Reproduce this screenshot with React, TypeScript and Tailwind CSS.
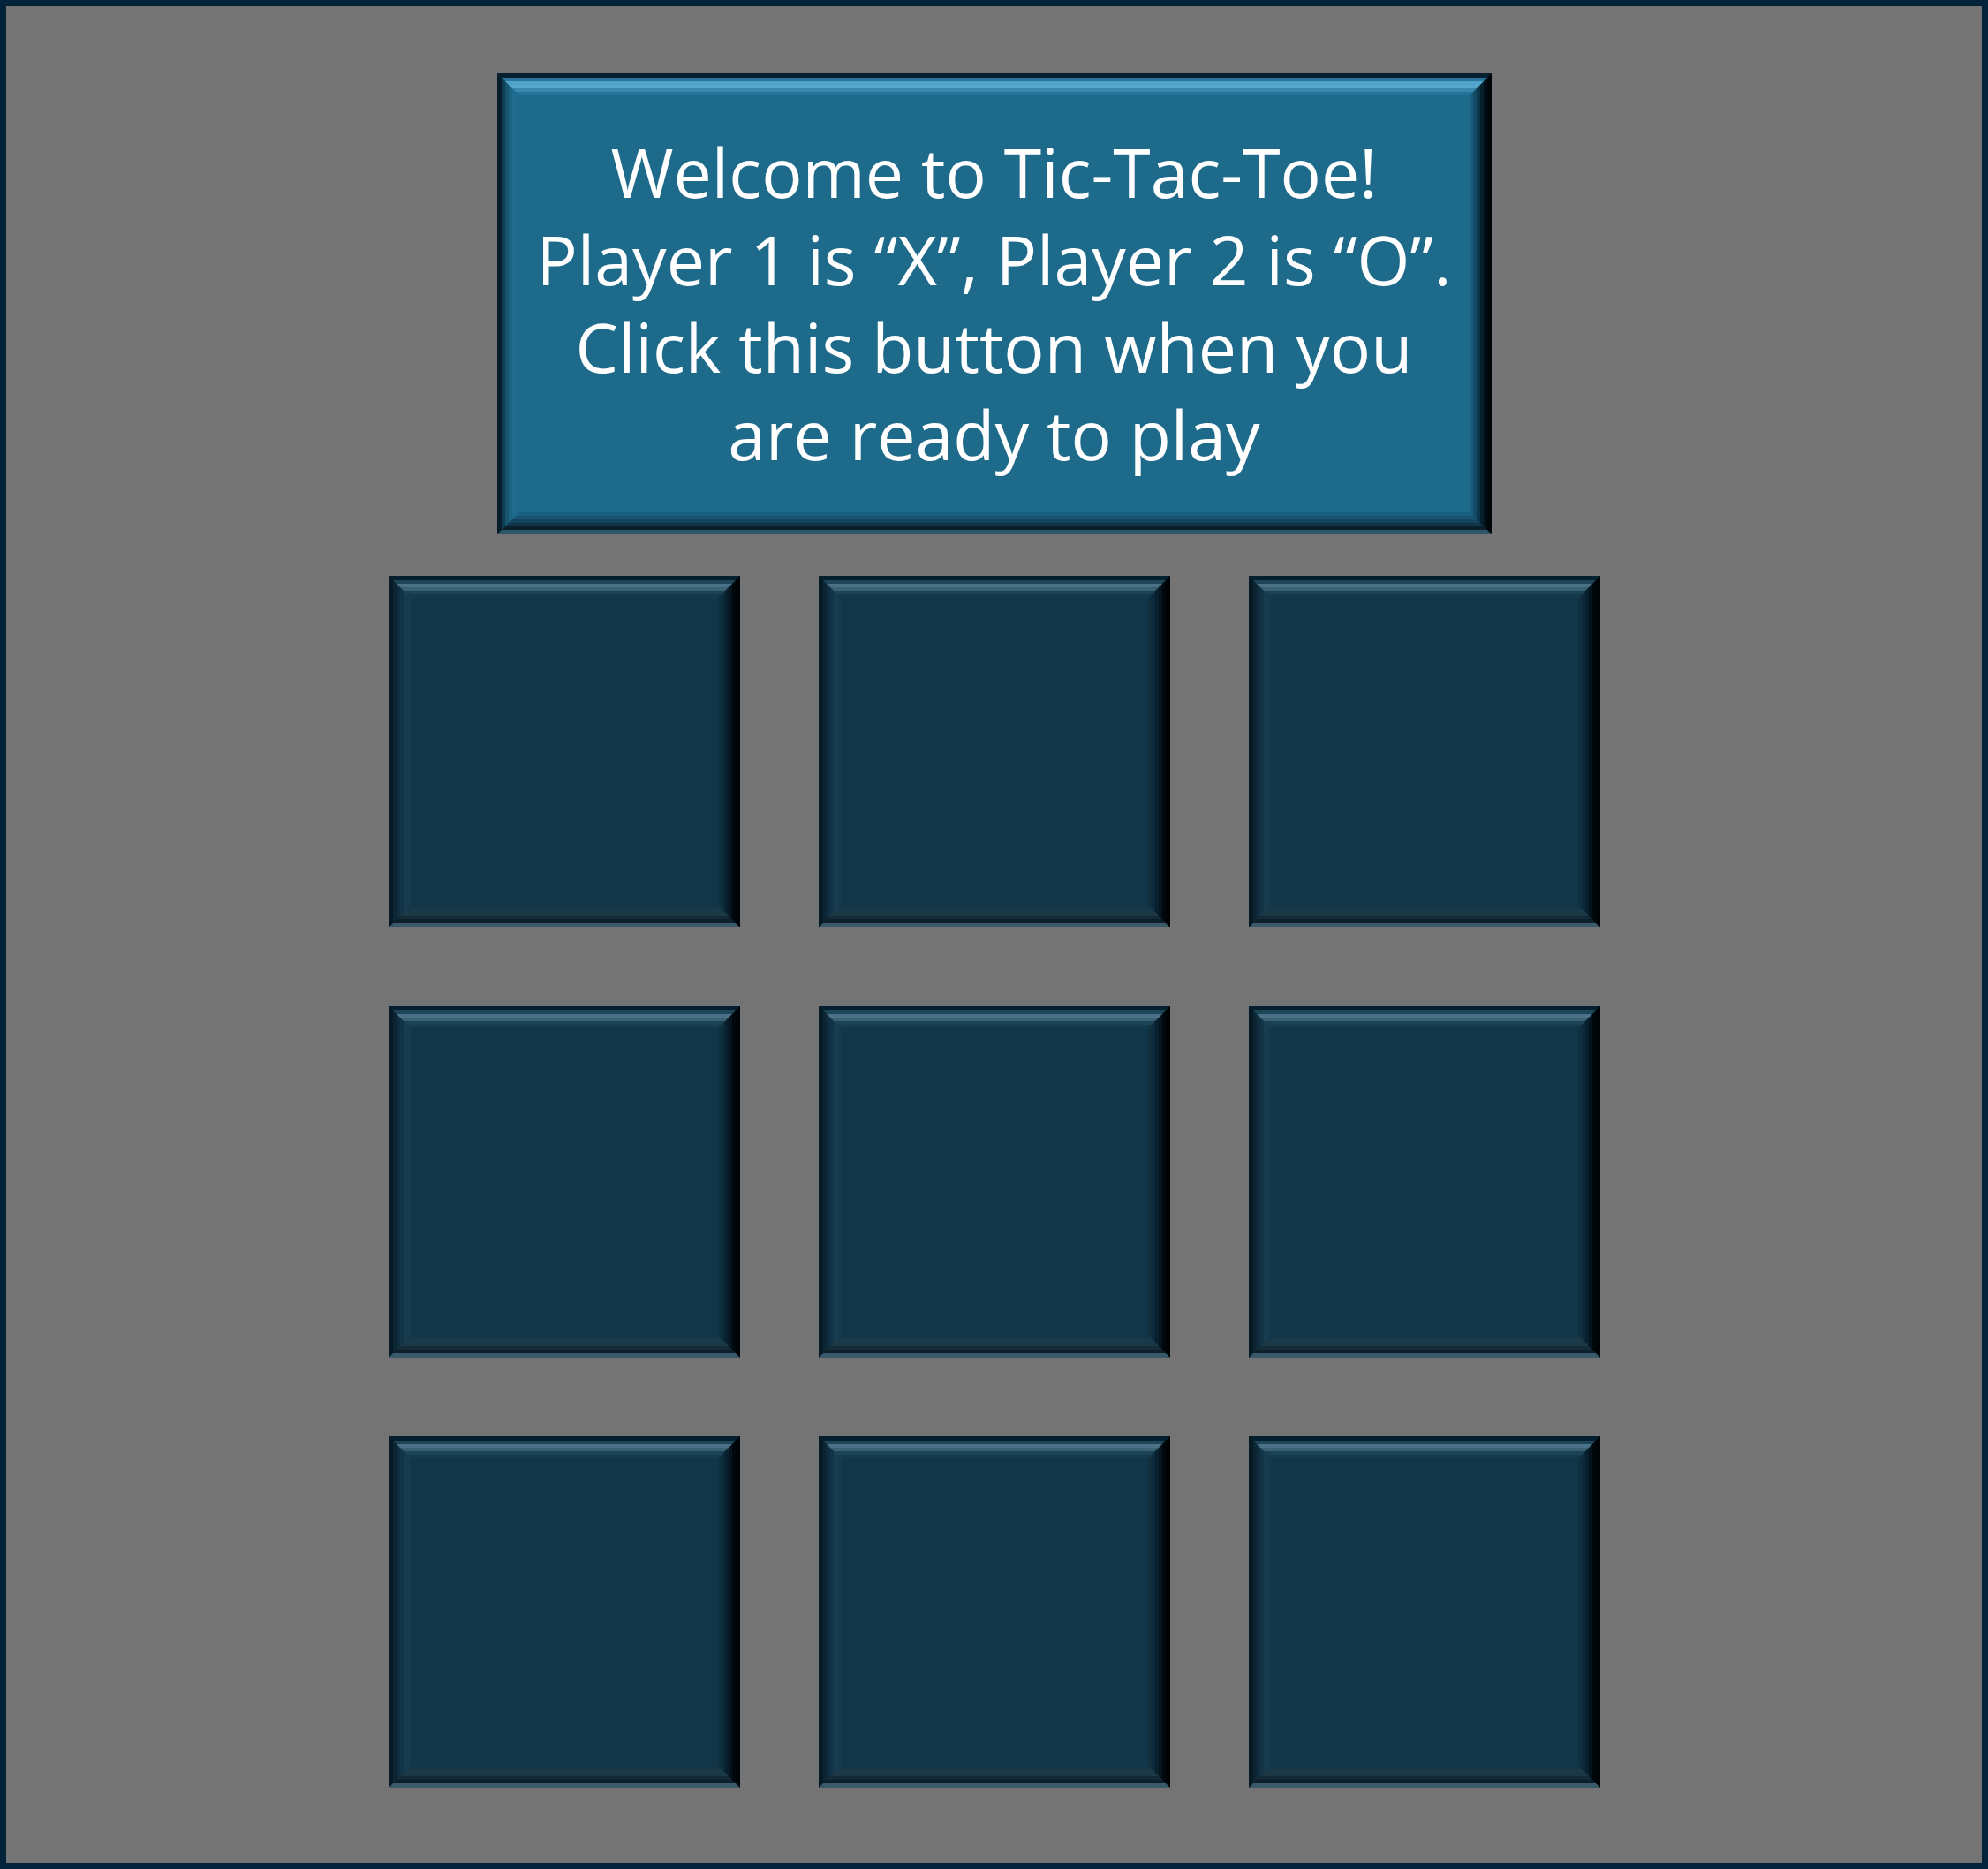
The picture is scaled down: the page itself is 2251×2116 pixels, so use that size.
import type { ReactNode } from "react";

// each ring of the bevel is a mitered border, outer → inner
const bannerRings = [
  "border-[5px] border-t-[#06202f] border-l-[#061e2b] border-r-[#000508] border-b-[#30566a]",
  "border-[4px] border-t-[#2a7598] border-l-[#0f3d54] border-r-[#020f17] border-b-[#0b1f2b]",
  "border-[4px] border-t-[#4da3c8] border-l-[#175470] border-r-[#06202e] border-b-[#10344a]",
  "border-[4px] border-t-[#55a8cc] border-l-[#1d6384] border-r-[#0c354a] border-b-[#144460]",
  "border-[4px] border-t-[#3888ad] border-l-[#216b8e] border-r-[#134b66] border-b-[#195372]",
  "border-[4px] border-t-[#25739a] border-l-[#1f6b8d] border-r-[#185c7c] border-b-[#1b5f80] bg-[#1d6a8a]",
];

const cellRings = [
  "border-[5px] border-t-[#04202e] border-l-[#061a26] border-r-[#000305] border-b-[#3a5a6a]",
  "border-[4px] border-t-[#1f4558] border-l-[#0b2533] border-r-[#01080c] border-b-[#0e1f29]",
  "border-[4px] border-t-[#4a7185] border-l-[#0f2d3e] border-r-[#04131c] border-b-[#132b37]",
  "border-[4px] border-t-[#3a6174] border-l-[#133447] border-r-[#08202d] border-b-[#1d3845]",
  "border-[4px] border-t-[#1c4255] border-l-[#173b4f] border-r-[#0c2a3a] border-b-[#1a3a4a]",
  "border-[4px] border-t-[#143a4e] border-l-[#163a4e] border-r-[#10303f] border-b-[#143646] bg-[#113549]",
];

function Bevel({ rings, children }: { rings: string[]; children?: ReactNode }) {
  return rings.reduceRight<ReactNode>(
    (inner, ring) => <div className={`h-full w-full ${ring}`}>{inner}</div>,
    children ?? null
  );
}

export default function App() {
  const cells = Array.from({ length: 9 });

  return (
    <div className="flex h-[2116px] w-[2251px] flex-col items-center border-[7px] border-[#03233a] bg-[#747474]">
      <button className="mt-[76px] h-[522px] w-[1126px] p-0">
        <Bevel rings={bannerRings}>
          <div
            className="flex h-full w-full flex-col items-center justify-center pb-[2px] text-center text-[77px] leading-[99px] text-white"
            style={{ fontFamily: '"Open Sans", "Noto Sans", sans-serif' }}
          >
            <span>Welcome to Tic-Tac-Toe!</span>
            <span>Player 1 is “X”, Player 2 is “O”.</span>
            <span>Click this button when you</span>
            <span>are ready to play</span>
          </div>
        </Bevel>
      </button>

      <div className="mt-[47px] grid grid-cols-[398px_398px_398px] grid-rows-[398px_398px_398px] gap-[89px]">
        {cells.map((_, i) => (
          <button key={i} className="h-[398px] w-[398px] p-0">
            <Bevel rings={cellRings} />
          </button>
        ))}
      </div>
    </div>
  );
}
